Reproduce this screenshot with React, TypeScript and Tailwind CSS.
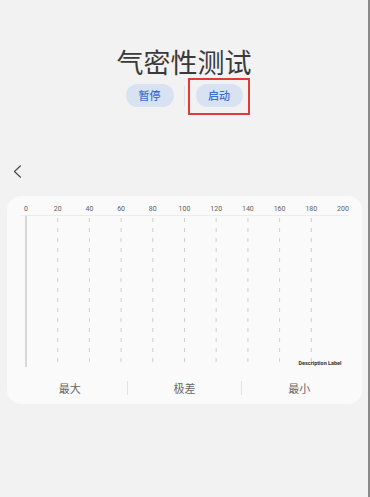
import React from "react";

const ticks = [0, 20, 40, 60, 80, 100, 120, 140, 160, 180, 200];

function Chart() {
  const x0 = 19;
  const step = 31.7;
  return (
    <svg width="355" height="176" viewBox="0 0 355 176" className="block">
      {ticks.map((t, i) => (
        <text
          key={t}
          x={x0 + i * step}
          y={15}
          textAnchor="middle"
          fontSize="7"
          fill="#5f5f5f"
          fontFamily="Roboto, 'Liberation Sans', sans-serif"
        >
          {t}
        </text>
      ))}
      <line x1={13} y1={19.5} x2={342} y2={19.5} stroke="#ececec" strokeWidth="1" />
      <line x1={x0} y1={20} x2={x0} y2={171} stroke="#b5b5b5" strokeWidth="1" />
      {ticks.slice(1, 10).map((t, i) => (
        <line
          key={t}
          x1={x0 + (i + 1) * step}
          y1={22}
          x2={x0 + (i + 1) * step}
          y2={171}
          stroke="#c4c4c4"
          strokeWidth="0.8"
          strokeDasharray="4 6"
        />
      ))}
      <text
        x={313}
        y={169}
        textAnchor="middle"
        fontSize="5.5"
        fontWeight="700"
        fill="#333"
        fontFamily="Roboto, 'Liberation Sans', sans-serif"
      >
        Description Label
      </text>
    </svg>
  );
}

export default function App() {
  return (
    <div
      className="relative w-[370px] h-[497px] bg-[#f2f2f2] border-r-2 border-[#8a8a8a] overflow-hidden"
      style={{ fontFamily: "'Noto Sans CJK SC', 'Noto Sans', sans-serif" }}
    >
      <div className="mt-[44px] h-[36px] flex items-center justify-center text-[27px] leading-[36px] font-normal text-[#3a3a3a]">
        气密性测试
      </div>
      <div className="mt-[4px] h-[23px] flex items-center justify-center">
        <div className="w-[48px] h-[23px] rounded-full bg-[#d8e2f2] flex items-center justify-center text-[11px] font-medium text-[#3d6dd3]">
          暂停
        </div>
        <div className="ml-[10px] w-[1px] h-[20px] bg-[#e4e4e4]" />
        <div className="ml-[11px] w-[47px] h-[23px] rounded-full bg-[#d8e2f2] flex items-center justify-center text-[11px] font-medium text-[#3d6dd3]">
          启动
        </div>
      </div>
      <div className="absolute left-[188px] top-[78px] w-[62px] h-[37px] border-2 border-[#e23a3a]" />
      <div className="mt-[58px] h-[12px] pl-[13px]">
        <svg width="9" height="13" viewBox="0 0 9 13" className="block">
          <path d="M7.5 0.8 L1.5 6.5 L7.5 12.2" fill="none" stroke="#4a4a4a" strokeWidth="1.2" strokeLinecap="round" strokeLinejoin="round" />
        </svg>
      </div>
      <div className="mt-[19px] ml-[7px] w-[355px] h-[208px] rounded-[14px] bg-[#fafafa]">
        <Chart />
        <div className="h-[32px] px-[6px] flex items-center">
          <div className="flex-1 text-center text-[11px] text-[#666666]">最大</div>
          <div className="w-[1px] h-[14px] bg-[#e2e2e2]" />
          <div className="flex-1 text-center text-[11px] text-[#666666]">极差</div>
          <div className="w-[1px] h-[14px] bg-[#e2e2e2]" />
          <div className="flex-1 text-center text-[11px] text-[#666666]">最小</div>
        </div>
      </div>
    </div>
  );
}
